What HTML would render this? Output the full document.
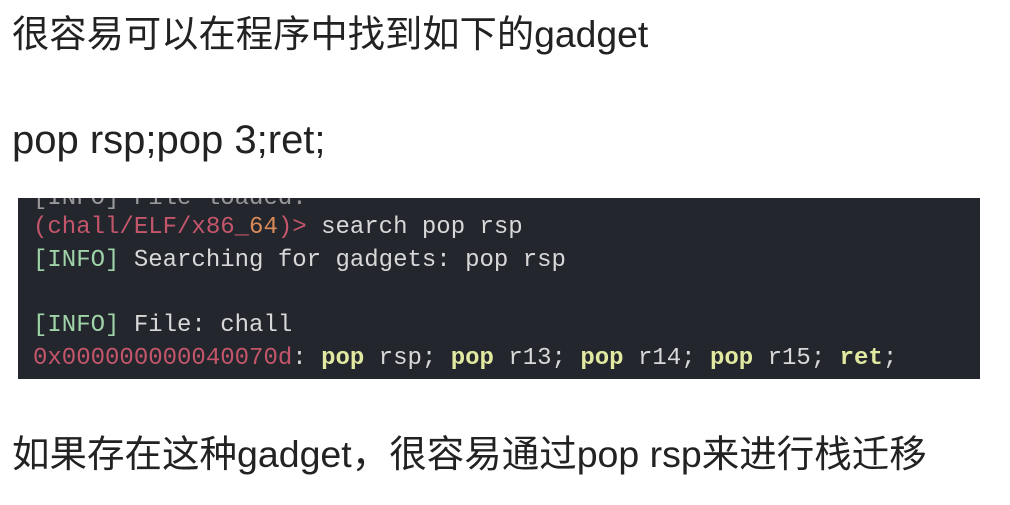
<!DOCTYPE html>
<html><head><meta charset="utf-8"><style>
html,body{margin:0;padding:0;background:#fff;width:1010px;height:505px;overflow:hidden;position:relative}
.t{position:absolute;left:12px;font-family:"Liberation Sans","Noto Sans CJK SC",sans-serif;font-size:37.3px;color:#222;white-space:nowrap;line-height:1}
.term{position:absolute;left:18px;top:198px;width:962px;height:181px;background:#24262d;overflow:hidden}
.term div{position:absolute;left:15px;font-family:"Liberation Mono","DejaVu Sans Mono",monospace;font-size:24px;color:#d8d8d8;white-space:pre;line-height:1}
.r{color:#c3566a}.g{color:#9fd3a8}.y{color:#e1e9a0;font-weight:bold}.o{color:#d98a56}
</style></head><body>
<div class="t" style="top:16px">很容易可以在程序中找到如下的gadget</div>
<div class="t" style="top:120px;font-size:40px">pop rsp;pop 3;ret;</div>
<div class="term">
<div style="top:-11px;color:#999">[INFO] File loaded.</div>
<div style="top:18px"><span class="r">(chall/ELF/x86_<span class="o">64</span>)&gt;</span> search pop rsp</div>
<div style="top:51px"><span class="g">[INFO]</span> Searching for gadgets: pop rsp</div>
<div style="top:116px"><span class="g">[INFO]</span> File: chall</div>
<div style="top:149px"><span class="r">0x000000000040070d</span>: <span class="y">pop</span> rsp; <span class="y">pop</span> r13; <span class="y">pop</span> r14; <span class="y">pop</span> r15; <span class="y">ret</span>;</div>
</div>
<div class="t" style="top:436px;font-size:37.5px">如果存在这种gadget，很容易通过pop rsp来进行栈迁移</div>
</body></html>
